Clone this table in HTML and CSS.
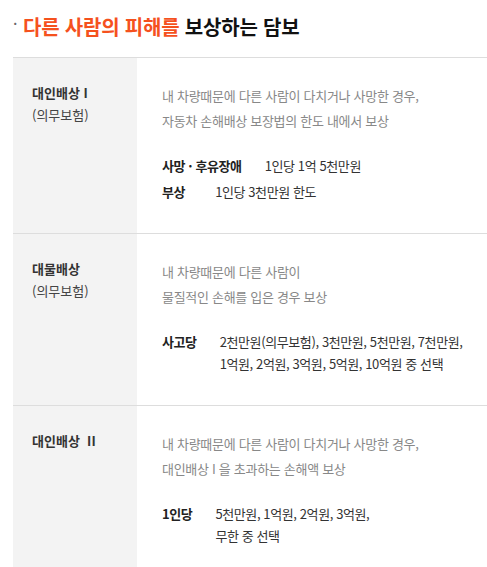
FILE: index.html
```html
<!DOCTYPE html>
<html lang="ko">
<head>
<meta charset="utf-8">
<link rel="stylesheet" href="styles.css">
</head>
<body>
<h2 class="title"><span class="dot">·</span><em class="accent">다른 사람의 피해를</em> 보상하는 담보</h2>
<div class="table">
  <div class="row">
    <div class="label"><strong>대인배상 I</strong><span>(의무보험)</span></div>
    <div class="content">
      <p class="desc">내 차량때문에 다른 사람이 다치거나 사망한 경우,<br>자동차 손해배상 보장법의 한도 내에서 보상</p>
      <div class="list">
        <div class="item"><span class="key">사망 · 후유장애</span><span class="val">1인당 1억 5천만원</span></div>
        <div class="item"><span class="key key-wide">부상</span><span class="val">1인당 3천만원 한도</span></div>
      </div>
    </div>
  </div>
  <div class="row">
    <div class="label"><strong>대물배상</strong><span>(의무보험)</span></div>
    <div class="content">
      <p class="desc">내 차량때문에 다른 사람이<br>물질적인 손해를 입은 경우 보상</p>
      <div class="list">
        <div class="item"><span class="key">사고당</span><span class="val">2천만원(의무보험), 3천만원, 5천만원, 7천만원,<br>1억원, 2억원, 3억원, 5억원, 10억원 중 선택</span></div>
      </div>
    </div>
  </div>
  <div class="row">
    <div class="label"><strong>대인배상 &nbsp;II</strong></div>
    <div class="content">
      <p class="desc">내 차량때문에 다른 사람이 다치거나 사망한 경우,<br>대인배상 I 을 초과하는 손해액 보상</p>
      <div class="list">
        <div class="item"><span class="key">1인당</span><span class="val">5천만원, 1억원, 2억원, 3억원,<br>무한 중 선택</span></div>
      </div>
    </div>
  </div>
</div>
</body>
</html>
```
FILE: styles.css
```css
* { box-sizing: border-box; }
html, body { margin: 0; padding: 0; background: #fff; }
body {
  font-family: "Noto Sans CJK KR", "Noto Sans", sans-serif;
  color: #333;
  padding: 0 0 0 13px;
}
.title {
  margin: 0;
  padding-top: 10px;
  height: 57px;
  font-size: 20px;
  font-weight: 700;
  line-height: 26px;
  color: #111;
  letter-spacing: -0.2px;
}
.dot {
  color: #666;
  font-weight: 400;
  font-size: 16px;
  display: inline-block;
  width: 10px;
  vertical-align: 5px;
}
.accent { font-style: normal; color: #f5511e; }
.table { border-top: 1px solid #ddd; }
.row {
  display: grid;
  grid-template-columns: 124px 1fr;
  border-bottom: 1px solid #ddd;
}
.label {
  background: #f3f3f3;
  padding: 24px 0 0 19px;
  display: flex;
  flex-direction: column;
  font-size: 13px;
  line-height: 22px;
  color: #444;
}
.label strong { font-weight: 700; color: #333; }
.content {
  padding: 25px 0 30px 25px;
}
.desc {
  margin: 0;
  font-size: 13px;
  line-height: 25px;
  color: #888;
  letter-spacing: -0.3px;
}
.list {
  margin-top: 22px;
  font-size: 13px;
  line-height: 22px;
  color: #222;
  letter-spacing: -0.4px;
  display: flex;
  flex-direction: column;
  gap: 4px;
}
.item { display: flex; gap: 23px; }
.key { font-weight: 700; color: #222; flex: none; }
.key-wide { margin-right: 7px; }
.val { color: #333; }
```
